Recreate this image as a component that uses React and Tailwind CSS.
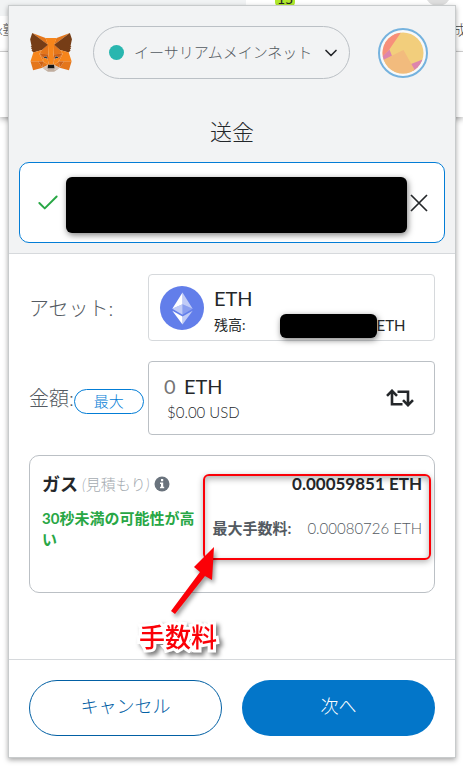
import React from "react";
import { Check, ChevronDown } from "lucide-react";

const foxShapes = [
	["#e2761b", "274.1,35.5 174.6,109.4 193,65.8"],
	["#e4761b", "44.4,35.5 143.1,110.1 125.6,65.8"],
	["#e4761b", "238.3,206.8 211.8,247.4 268.5,263 284.8,207.7"],
	["#e4761b", "33.9,207.7 50.1,263 106.8,247.4 80.3,206.8"],
	["#e4761b", "103.6,138.2 87.8,162.1 144.1,164.6 142.1,104.1"],
	["#e4761b", "214.9,138.2 175.9,103.4 174.6,164.6 230.8,162.1"],
	["#e4761b", "106.8,247.4 140.6,230.9 111.4,208.1"],
	["#e4761b", "177.9,230.9 211.8,247.4 207.1,208.1"],
	["#d7c1b3", "211.8,247.4 177.9,230.9 180.6,253 180.3,262.3"],
	["#d7c1b3", "106.8,247.4 138.3,262.3 138.1,253 140.6,230.9"],
	["#233447", "138.8,193.5 110.6,185.2 130.5,176.1"],
	["#233447", "179.7,193.5 188,176.1 208,185.2"],
	["#cd6116", "106.8,247.4 111.6,206.8 80.3,207.7"],
	["#cd6116", "207,206.8 211.8,247.4 238.3,207.7"],
	["#cd6116", "230.8,162.1 174.6,164.6 179.8,193.5 188.1,176.1 208.1,185.2"],
	["#cd6116", "110.6,185.2 130.6,176.1 138.8,193.5 144.1,164.6 87.8,162.1"],
	["#e4751f", "87.8,162.1 111.4,208.1 110.6,185.2"],
	["#e4751f", "208.1,185.2 207.1,208.1 230.8,162.1"],
	["#e4751f", "144.1,164.6 138.8,193.5 145.4,227.6 146.9,182.7"],
	["#e4751f", "174.6,164.6 171.9,182.6 173.1,227.6 179.8,193.5"],
	["#f6851b", "179.8,193.5 173.1,227.6 177.9,230.9 207.1,208.1 208.1,185.2"],
	["#f6851b", "110.6,185.2 111.4,208.1 140.6,230.9 145.4,227.6 138.8,193.5"],
	[
		"#c0ad9e",
		"180.3,262.3 180.6,253 178.1,250.8 140.4,250.8 138.1,253 138.3,262.3 106.8,247.4 117.8,256.4 140.1,271.9 178.4,271.9 200.8,256.4 211.8,247.4",
	],
	[
		"#161616",
		"177.9,230.9 173.1,227.6 145.4,227.6 140.6,230.9 138.1,253 140.4,250.8 178.1,250.8 180.6,253",
	],
	[
		"#763d16",
		"278.3,114.2 286.8,73.4 274.1,35.5 177.9,106.9 214.9,138.2 267.2,153.5 278.8,140 273.8,136.4 281.8,129.1 275.6,124.3 283.6,118.2",
	],
	[
		"#763d16",
		"31.8,73.4 40.3,114.2 34.9,118.2 42.9,124.3 36.8,129.1 44.8,136.4 39.8,140 51.3,153.5 103.6,138.2 140.6,106.9 44.4,35.5",
	],
	["#f6851b", "267.2,153.5 214.9,138.2 230.8,162.1 207.1,208.1 238.3,207.7 284.8,207.7"],
	["#f6851b", "103.6,138.2 51.3,153.5 33.9,207.7 80.3,207.7 111.4,208.1 87.8,162.1"],
	[
		"#f6851b",
		"174.6,164.6 177.9,106.9 193.1,65.8 125.6,65.8 140.6,106.9 144.1,164.6 145.3,182.8 145.4,227.6 173.1,227.6 173.3,182.8",
	],
];

function FoxLogo() {
	return (
		<svg viewBox="31 35 256 238" className="w-[42px] h-[39px] shrink-0" aria-hidden="true">
			{foxShapes.map(([fill, points]) => (
				<polygon key={points} fill={fill} points={points} />
			))}
		</svg>
	);
}

function EthLogo() {
	return (
		<svg viewBox="0 0 44 44" className="w-11 h-11 shrink-0" aria-hidden="true">
			<circle cx="22" cy="22" r="22" fill="#627eea" />
			<path d="M22.5 6.5v11.8l10.2 4.5z" fill="#fff" fillOpacity=".6" />
			<path d="M22.5 6.5L12.3 22.8l10.2-4.5z" fill="#fff" />
			<path d="M22.5 28.8l10.2-6-10.2-4.5z" fill="#fff" fillOpacity=".25" />
			<path d="M12.3 22.8l10.2 6V18.3z" fill="#fff" fillOpacity=".6" />
			<path d="M22.5 38.5V30.6l10.2-5.9z" fill="#fff" fillOpacity=".6" />
			<path d="M22.5 38.5V30.6l-10.2-5.9z" fill="#fff" />
		</svg>
	);
}

function Avatar() {
	return (
		<svg viewBox="0 0 50 50" className="w-[50px] h-[50px]" aria-hidden="true">
			<defs>
				<clipPath id="avatar-clip">
					<circle cx="25" cy="25" r="20.5" />
				</clipPath>
			</defs>
			<circle cx="25" cy="25" r="24" fill="#f7f9fa" stroke="#75b2de" strokeWidth="2" />
			<g clipPath="url(#avatar-clip)">
				<rect width="50" height="50" fill="#f2ce7c" />
				<path d="M0 0H26L11 22 0 34z" fill="#f78f7b" />
				<path d="M3 30L11.5 21.5 14 28 5 33z" fill="#dd85ad" />
				<path d="M33 36L46 31V46H36z" fill="#dd85ad" />
				<path d="M4 32.5L25.5 22 39 46H6z" fill="#f2bb7d" />
			</g>
		</svg>
	);
}

function CloseIcon() {
	return (
		<svg viewBox="0 0 18 18" className="w-[18px] h-[18px]" stroke="#24272a" strokeWidth="1.7" aria-hidden="true">
			<path d="M1 1L17 17M17 1L1 17" />
		</svg>
	);
}

function InfoIcon() {
	return (
		<svg viewBox="0 0 16 16" className="ml-[5px] w-4 h-4" aria-hidden="true">
			<circle cx="8" cy="8" r="7.5" fill="#6a737d" />
			<path d="M7 3h2.200v2.200H7zM6 6.400h3.200v4.400h1V12.300H6v-1.500h1V7.900H6z" fill="#fff" />
		</svg>
	);
}

function SwapIcon() {
	return (
		<svg viewBox="0 0 28 18" className="w-7 h-[18px]" fill="none" stroke="#24272a" strokeWidth="2.6" aria-hidden="true">
			<path d="M6 2.5V15.200H16.500M1 6.800L6 1.800 11 6.800" />
			<path d="M11.500 2.800H22V15.500M17 11.200L22 16.200 27 11.200" />
		</svg>
	);
}

// browser window that shows around the popup
function Backdrop() {
	return (
		<div className="absolute inset-0 overflow-hidden bg-white text-[#444] text-sm" aria-hidden="true">
			<div className="relative flex bg-[#f1f3f4] h-4">
				<div className="w-[246px]"></div>
				<div className="flex-1 bg-white">
					<span className="absolute top-[-9px] left-[275px] flex justify-center items-end bg-[#b0e82c] rounded-sm w-5 h-[15px] font-normal text-[#222] text-sm leading-[14px]">
						15
					</span>
					<span className="absolute top-[-20px] left-[425px] bg-[#dedede] rounded-full w-[26px] h-[26px]"></span>
				</div>
			</div>
			<div className="flex justify-between bg-white pt-1 border-[#d5d5d5] border-b h-9">
				<span className="-ml-1">x塾</span>
				<span className="-mr-1">成</span>
			</div>
			<div className="bg-white shadow-[0_2px_6px_rgba(0,0,0,0.35)] h-[65px]"></div>
		</div>
	);
}

function Header() {
	return (
		<header className="bg-[#f2f3f4] px-[10px] pt-5 pb-[10px] border-[#d6d9dc] border-b">
			<div className="flex items-center pr-[17px] pl-[11px] h-[53px]">
				<FoxLogo />
				<button
					type="button"
					className="flex flex-1 items-center mr-7 ml-[21px] pr-2 pl-[15px] border border-[#bbc0c5] rounded-full min-w-0 h-[53px] text-[#535a61] text-[15px]"
				>
					<span className="bg-[#29b6af] mr-[10px] rounded-full w-[15px] h-[15px] shrink-0"></span>
					<span className="flex-1 text-left whitespace-nowrap">イーサリアムメインネット</span>
					<ChevronDown size={20} strokeWidth={2} className="text-[#24272a] shrink-0" />
				</button>
				<button type="button" aria-label="アカウント" className="shrink-0">
					<Avatar />
				</button>
			</div>
			<h1 className="mt-[35px] mb-3 text-[#24272a] text-[22px] text-center leading-9">送金</h1>
			<div className="flex items-center bg-white pr-4 pl-[15px] border border-[#037dd6] rounded-[10px] h-[81px]">
				<Check size={26} strokeWidth={1.8} className="text-[#28a745] shrink-0" />
				<div className="flex-1 bg-black shadow-[1px_2px_6px_rgba(0,0,0,0.5)] mt-1 mr-[3px] ml-[5px] rounded-md h-14"></div>
				<button type="button" aria-label="消去">
					<CloseIcon />
				</button>
			</div>
		</header>
	);
}

function AssetRow() {
	return (
		<div className="flex items-center">
			<div className="w-[119px] text-[#535a61] text-xl shrink-0">アセット:</div>
			<button
				type="button"
				className="flex flex-1 items-center gap-[10px] px-[11px] border border-[#d6d9dc] rounded h-[67px] text-[#24272a] text-left"
			>
				<EthLogo />
				<span className="flex-1 pt-1.5 font-normal">
					<span className="block text-xl leading-7">ETH</span>
					<span className="flex items-center text-sm leading-6">
						<span>残高:</span>
						<span className="bg-black shadow-[1px_2px_6px_rgba(0,0,0,0.5)] mt-0.5 ml-[34px] rounded-md w-[97px] h-6"></span>
						<span className="text-[15px]">ETH</span>
					</span>
				</span>
			</button>
		</div>
	);
}

function AmountRow() {
	return (
		<div className="flex items-center mt-5">
			<div className="flex items-center w-[119px] shrink-0">
				<label htmlFor="amount" className="text-[#535a61] text-xl">
					金額:
				</label>
				<button
					type="button"
					className="mt-1.5 border border-[#037dd6] rounded-full w-[70px] h-[25px] text-[#037dd6] text-[15px] leading-5"
				>
					最大
				</button>
			</div>
			<div className="flex flex-1 items-center pr-5 pl-[15px] border border-[#bbc0c5] rounded h-[74px]">
				<div className="flex-1">
					<div className="flex items-center font-normal text-[#24272a] text-xl leading-7">
						<input
							id="amount"
							type="text"
							placeholder="0"
							className="outline-none w-5 placeholder:text-[#757575]"
						/>
						<span>ETH</span>
					</div>
					<div className="pl-[3px] text-[#24272a] text-[15px] leading-6">$0.00 USD</div>
				</div>
				<button type="button" aria-label="通貨を切り替える">
					<SwapIcon />
				</button>
			</div>
		</div>
	);
}

function Annotation() {
	return (
		<>
			<div className="top-[18px] right-[3px] absolute shadow-[0_2px_6px_rgba(0,0,0,0.3),inset_0_3px_6px_rgba(0,0,0,0.3)] border-2 border-[#fb0007] rounded-md w-[228px] h-[86px]"></div>
			<svg
				viewBox="0 0 50 72"
				className="top-[90px] left-[138px] absolute drop-shadow-[2px_3px_2px_rgba(0,0,0,0.4)] w-[50px] h-[72px]"
				fill="#fb0007"
				aria-hidden="true"
			>
				<path d="M46 1L44 34 37 30 7 68 3 65 32 26 26 21z" />
			</svg>
			<p className="top-[163px] left-[109px] absolute drop-shadow-[3px_3px_2px_rgba(0,0,0,0.5)] font-medium text-[#fb0007] text-[26px] leading-9 whitespace-nowrap [-webkit-text-stroke:6px_white] [paint-order:stroke_fill]">
				手数料
			</p>
		</>
	);
}

function GasCard() {
	return (
		<section className="relative mt-5 px-3 pt-4 border border-[#bbc0c5] rounded-[10px] h-[138px]">
			<div className="flex justify-between items-center leading-6">
				<h2 className="flex items-center text-[#24272a]">
					<span className="font-bold text-lg leading-6">ガス</span>
					<span className="ml-1 text-[#a5abb1] text-[15px] leading-6">
						<i>(</i>見積もり<i>)</i>
					</span>
					<InfoIcon />
				</h2>
				<span className="font-bold text-[#24272a] text-[17px]">0.00059851 ETH</span>
			</div>
			<div className="flex justify-between mt-3">
				<p className="w-[155px] font-bold text-[#28a745] text-[15px] leading-[21px]">30秒未満の可能性が高い</p>
				<p className="flex gap-4 pt-2 text-[#535a61] text-[15px] leading-6 whitespace-nowrap">
					<span className="font-bold">最大手数料:</span>
					<span>0.00080726 ETH</span>
				</p>
			</div>
			<Annotation />
		</section>
	);
}

function App() {
	return (
		<div className="relative pt-[5px] pr-[7px] pb-[10px] pl-2 font-['Lato','Noto_Sans_CJK_JP',sans-serif] font-light" lang="ja">
			<Backdrop />
			<main className="relative bg-white shadow-[0_2px_5px_rgba(0,0,0,0.35)] border border-[#c8cbcc]">
				<Header />
				<div className="px-5 pt-5 pb-[66px]">
					<AssetRow />
					<AmountRow />
					<GasCard />
				</div>
				<footer className="gap-5 grid grid-cols-2 px-5 pt-5 pb-[21px] border-[#d6d9dc] border-t text-lg">
					<button type="button" className="pb-1 border border-[#0260a4] rounded-full h-14 text-[#0260a4]">
						キャンセル
					</button>
					<button type="button" className="bg-[#0376c9] pb-1 rounded-full h-14 text-white">
						次へ
					</button>
				</footer>
			</main>
		</div>
	);
}

export default App;
